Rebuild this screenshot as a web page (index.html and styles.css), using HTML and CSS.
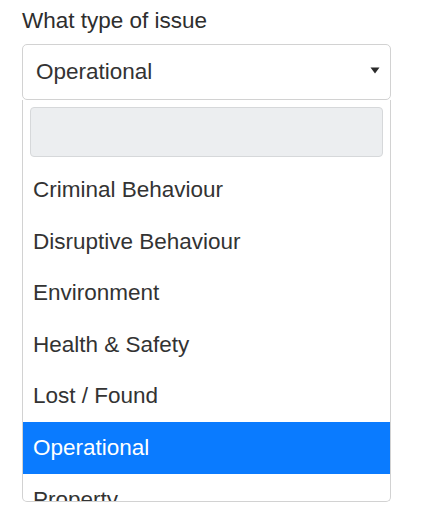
FILE: index.html
```html
<!DOCTYPE html>
<html lang="en">

<head>
    <meta charset="UTF-8">
    <meta name="viewport" content="width=device-width, initial-scale=1.0">
    <title>Report an issue</title>
    <link rel="stylesheet" href="styles.css">
</head>

<body>
    <div class="field">
        <label class="field-label">What type of issue</label>

        <div class="select">
            <span class="select-value">Operational</span>
            <svg class="select-arrow" width="10" height="7" viewBox="0 0 10 7">
                <path d="M0.5 0.5 L9.5 0.5 L5 6.5 Z" fill="#2b2b2b"/>
            </svg>
        </div>

        <div class="dropdown">
            <div class="search">
                <input type="text" class="search-input">
            </div>
            <ul class="options">
                <li>Criminal Behaviour</li>
                <li>Disruptive Behaviour</li>
                <li>Environment</li>
                <li>Health &amp; Safety</li>
                <li>Lost / Found</li>
                <li class="selected">Operational</li>
                <li>Property</li>
            </ul>
        </div>
    </div>
</body>

</html>
```

FILE: styles.css
```css
body {
    margin: 0;
    padding: 9px 22px;
    font-family: 'Liberation Sans', Arial, sans-serif;
    background-color: #fff;
    color: #333;
}

.field {
    width: 369px;
}

.field-label {
    display: block;
    font-size: 22.5px;
    line-height: 24px;
    margin-bottom: 11px;
    color: #2e2e2e;
}

.select {
    display: flex;
    align-items: center;
    justify-content: space-between;
    height: 56px;
    box-sizing: border-box;
    padding: 0 10px 0 13px;
    border: 1px solid #d2d2d2;
    border-radius: 5px;
    font-size: 22.5px;
}

.select-arrow {
    margin-top: -4px;
}

.dropdown {
    border: 1px solid #d2d2d2;
    border-top: none;
    border-radius: 0 0 5px 5px;
    overflow: hidden;
}

.search {
    padding: 7px;
}

.search-input {
    display: block;
    width: 100%;
    height: 50px;
    box-sizing: border-box;
    margin: 0;
    background-color: #eceef0;
    border: 1px solid #d6d8da;
    border-radius: 4px;
}

.options {
    list-style: none;
    margin: 0;
    padding: 0;
    height: 337px;
    overflow: hidden;
}

.options li {
    padding: 12px 10px;
    line-height: 27.6px;
    font-size: 22.5px;
    color: #333;
}

.options li.selected {
    background-color: #0a7bff;
    color: #fff;
}
```
